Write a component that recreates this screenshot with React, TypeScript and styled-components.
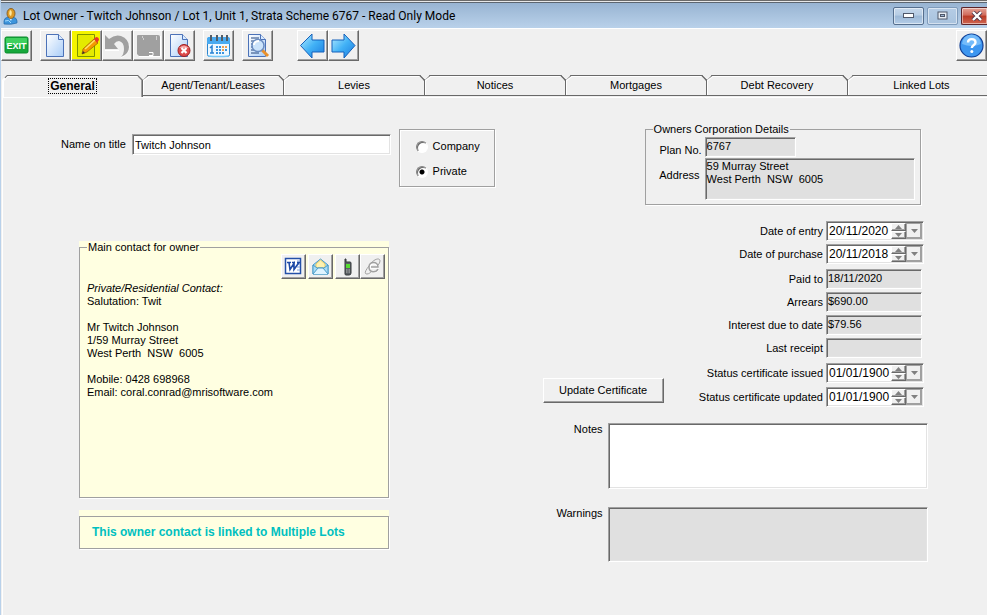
import React from "react";
import styled, { createGlobalStyle, css } from "styled-components";

const GlobalStyle = createGlobalStyle`
  *, *::before, *::after { box-sizing: border-box; }
  body {
    margin: 0;
    background: #f0f0f0;
    color: #000;
    font: 11px/13px "Liberation Sans", Arial, sans-serif;
  }
  button, input, textarea { font: inherit; color: inherit; margin: 0; }
`;

const sunken = css`
  border: 1px solid;
  border-color: #a0a0a0 #fff #fff #a0a0a0;
  box-shadow: inset 1px 1px 0 #696969, inset -1px -1px 0 #e3e3e3;
`;

const raised = css`
  border: 1px solid;
  border-color: #fff #696969 #696969 #fff;
  box-shadow: inset -1px -1px 0 #a0a0a0;
  background: #f0f0f0;
`;

const Window = styled.main`
  display: flex;
  flex-direction: column;
  min-height: 100vh;
  overflow: hidden;
  border-left: 1px solid #b9d1ea;
`;

const TitleBar = styled.header`
  display: flex;
  align-items: center;
  height: 29px;
  padding: 3px 0 0 2px;
  border-top: 1px solid #6b6b6b;
  border-bottom: 1px solid #fff;
  background: linear-gradient(#e8e8e8 1px, #5d6670 1px, #5d6670 2px, #98b4d2 2px, #b9d1ea);
`;

const Title = styled.h1`
  flex: 1;
  margin: 0 0 0 5px;
  font: 12px/18px Roboto, "Noto Sans", sans-serif;
  white-space: nowrap;
`;

const Caption = styled.div`
  display: flex;
  gap: 3px;
`;

const CaptionButton = styled.button<{ $faded?: boolean; $close?: boolean }>`
  display: grid;
  place-items: center;
  width: ${(p) => (p.$close ? 26 : 31)}px;
  height: 18px;
  padding: ${(p) => (p.$close ? "0 0 0 4px" : "0")};
  border: 1px solid ${(p) => (p.$close ? "#5c2328" : p.$faded ? "#7f9bbb" : "#566f8e")};
  border-right-width: ${(p) => (p.$close ? 0 : 1)}px;
  border-radius: ${(p) => (p.$close ? "2px 0 0 2px" : "2px")};
  box-shadow: inset 0 0 0 1px #ffffff80;
  background: ${(p) =>
    p.$close
      ? "linear-gradient(#e3a396, #d0695a 45%, #b93a25 50%, #cf6450)"
      : p.$faded
        ? "linear-gradient(#b5cce5, #a9c3de)"
        : "linear-gradient(#c6d8eb, #b6cce4 45%, #9cb8d6 50%, #b4cde8)"};
`;

const Toolbar = styled.nav`
  display: flex;
  align-items: center;
  gap: 8px;
  padding-top: 1px;
`;

const ToolGroup = styled.div<{ $push?: "near" | "end" }>`
  display: flex;
  margin-left: ${(p) => (p.$push === "end" ? "auto" : p.$push === "near" ? "16px" : "0")};
`;

const ToolButton = styled.button<{ $size?: number; $tint?: string }>`
  ${raised}
  display: grid;
  place-items: center;
  width: ${(p) => p.$size ?? 31}px;
  height: ${(p) => p.$size ?? 31}px;
  padding: 0;
  background: ${(p) => p.$tint ?? "#f0f0f0"};
`;

const Tabs = styled.div`
  display: grid;
  grid-template-columns: repeat(6, 141fr) 148fr;
  margin: 14px -9px 0 1px;
`;

const Tab = styled.button<{ $active?: boolean }>`
  position: relative;
  z-index: ${(p) => (p.$active ? 1 : 0)};
  height: ${(p) => (p.$active ? 22 : 21)}px;
  padding: 0;
  border: 1px solid #696969;
  border-left-color: ${(p) => (p.$active ? "#fff" : "#696969")};
  border-left-width: ${(p) => (p.$active ? 1 : 0)}px;
  border-bottom-width: ${(p) => (p.$active ? 0 : 1)}px;
  border-radius: 5px 5px 0 0;
  corner-shape: bevel;
  background: #f0f0f0;
  box-shadow: inset 1px 1px 0 #fff${(p) => (p.$active ? ", inset -1px 0 0 #a0a0a0" : "")};
  font-weight: ${(p) => (p.$active ? "bold" : "normal")};
  font-size: ${(p) => (p.$active ? 12 : 11)}px;
  line-height: 13px;

  span {
    padding: 0 1px;
    outline: ${(p) => (p.$active ? "1px dotted #000" : "none")};
  }
`;

const Page = styled.section`
  flex: 1;
  display: grid;
  grid-template-columns: 9fr 8fr;
  column-gap: 48px;
  align-items: start;
  margin: 0 0 0 1px;
  padding: 25px 59px 16px 58px;
  border-left: 1px solid #fff;
  border-top: 1px solid #fff;
`;

const Column = styled.div`
  display: flex;
  flex-direction: column;
`;

const NameRow = styled.div`
  display: flex;
  align-items: flex-start;
  gap: 8px;
  padding-top: 6px;
`;

const NameLabel = styled.label`
  width: 63px;
  padding-top: 9px;
  white-space: nowrap;
`;

const NameInput = styled.input`
  ${sunken}
  flex: 1;
  min-width: 0;
  height: 21px;
  margin-top: 5px !important;
  padding: 0 2px;
  background: #fff;
`;

const OwnerKind = styled.fieldset`
  display: flex;
  flex-direction: column;
  gap: 12px;
  width: 96px;
  height: 58px;
  margin: 0;
  padding: 10px 0 0 16px;
  border: 1px solid #a0a0a0;
  box-shadow: inset 1px 1px 0 #fff, 1px 1px 0 #fff;
`;

const Choice = styled.label`
  display: flex;
  align-items: center;
  gap: 5px;

  input {
    appearance: none;
    width: 12px;
    height: 12px;
    border: 1px solid;
    border-color: #808080 #fff #fff #808080;
    border-radius: 50%;
    background: #fff;
    box-shadow: inset 1px 1px 0 #696969;
  }
  input:checked {
    background: radial-gradient(circle, #000 2px, #fff 3px);
  }
`;

const Card = styled.div`
  margin: 54px 106px 0 18px;
  background: #ffffe1;
`;

const NoticeCard = styled(Card)`
  margin-top: 12px;
  padding-top: 6px;
`;

const Group = styled.fieldset<{ $height: number }>`
  min-width: 0;
  min-height: ${(p) => p.$height}px;
  margin: 0;
  padding: 0 3px 3px 7px;
  border: 1px solid #a0a0a0;
  box-shadow: 1px 1px 0 #fff;

  legend {
    margin: 0;
    padding: 0 1px;
  }
`;

const ContactTools = styled.div`
  display: flex;
  justify-content: flex-end;
  gap: 2px;
`;

const ContactText = styled.address`
  margin-top: 3px;
  font-style: normal;
  white-space: pre-line;

  em { font-style: italic; }
`;

const Notice = styled.p`
  margin: 0;
  padding: 9px 12px;
  border: 1px solid #a0a0a0;
  box-shadow: 1px 1px 0 #fff;
  color: #00c0c0;
  font-weight: bold;
  font-size: 12px;
`;

const Corporation = styled.div`
  margin: 0 7px 0 102px;
`;

const CorporationGrid = styled.div`
  display: grid;
  grid-template-columns: 49px 1fr;
  gap: 1px 3px;
  padding: 1px 2px 0 0;

  label {
    padding-top: 7px;
    text-align: right;
  }
  label + input { width: 91px; }
  label:nth-of-type(2) { padding: 11px 2px 0 0; }
`;

const box = css`
  ${sunken}
  display: block;
  width: 100%;
  min-width: 0;
  padding: 1px;
  border-radius: 0;
  resize: none;
  outline: none;
`;

const ReadOnlyInput = styled.input`
  ${box}
  height: 20px;
  padding-bottom: 3px;
  background: #e0e0e0;
`;

const TextArea = styled.textarea<{ $height: number; $locked?: boolean }>`
  ${box}
  height: ${(p) => p.$height}px;
  background: ${(p) => (p.$locked ? "#e0e0e0" : "#fff")};
`;

const FinanceRow = styled.div`
  display: flex;
  align-items: flex-end;
  gap: 16px;
  margin: 16px 4px 0 0;
`;

const UpdateButton = styled.button`
  ${raised}
  width: 121px;
  height: 25px;
  margin-bottom: 4px !important;
  padding: 0;
  white-space: nowrap;
`;

const Fields = styled.div`
  flex: 1;
  display: flex;
  flex-direction: column;
  gap: 5px;
`;

const FieldSet = styled.div<{ $gap?: number }>`
  display: grid;
  grid-template-columns: 1fr 98px;
  align-items: center;
  gap: ${(p) => p.$gap ?? 3}px 3px;

  > label { text-align: right; white-space: nowrap; }
  > input { width: 96px; }
`;

const DateBox = styled.div`
  ${sunken}
  display: flex;
  height: 20px;
  padding: 1px;
  background: #fff;

  input {
    flex: 1;
    min-width: 0;
    padding: 0 1px;
    border: 0;
    background: transparent;
    font-size: 12px;
    outline: none;
  }
`;

const Spinner = styled.div`
  display: flex;
  flex-direction: column;
  width: 15px;
`;

const ArrowButton = styled.button`
  ${raised}
  flex: 1;
  display: grid;
  place-items: center;
  padding: 0;
`;

const DropButton = styled(ArrowButton)`
  flex: 0 0 16px;
  border-color: #a0a0a0;
`;

const MemoRow = styled.div<{ $top: number }>`
  display: grid;
  grid-template-columns: 60px 1fr;
  gap: 5px;
  margin-top: ${(p) => p.$top}px;

  label { text-align: right; }
`;

const UserIcon = () => (
  <svg width="15" height="17" viewBox="0 0 15 17">
    <path d="M1 16v-3q0-3 4-4h5q4 1 4 4v2q-6 2-13 1z" fill="#3d95dc" stroke="#2267a8" strokeWidth=".7" />
    <path d="M5 8h5l-2 5z" fill="#dff1ff" />
    <ellipse cx="8" cy="5.5" rx="4" ry="5" fill="#dc9a26" stroke="#7c5014" strokeWidth=".8" />
    <path d="M7 2q3 1 1 6-3-1-1-6" fill="#ffe9a0" />
    <path d="M2 13q4-2 6 2" stroke="#a4dcff" fill="none" />
  </svg>
);

const PageShape = ({ fill = "url(#paper)", stroke = "#4c72b8" }) => (
  <>
    <defs>
      <linearGradient id="paper" x1="0" y1="0" x2="1" y2="1">
        <stop offset="0" stopColor="#fff" />
        <stop offset="1" stopColor="#a9cdf8" />
      </linearGradient>
    </defs>
    <path d="M4.5 2.5h12l5 5v17h-17z" fill={fill} stroke={stroke} />
    <path d="M16.5 2.5v5h5" fill="#d9eafe" stroke={stroke} />
  </>
);

const Icon = ({ children, size = 27 }: { children: React.ReactNode; size?: number }) => (
  <svg width={size} height={size} viewBox={`0 0 ${size} ${size}`} aria-hidden="true">
    {children}
  </svg>
);

const ExitIcon = () => (
  <Icon>
    <rect x="2" y="5" width="23" height="16" rx="1.500" fill="#16a83b" stroke="#0b8a2c" />
    <path d="M3 7q0-1 1-1h19q1 0 1 1v6H3z" fill="#3fd05e" />
    <text x="13.5" y="17" textAnchor="middle" fill="#fff" fontWeight="bold" fontSize="9" fontFamily="Liberation Sans">EXIT</text>
  </Icon>
);

const EditIcon = () => (
  <Icon>
    <path d="M4.500 2.500h17v22h-17z" fill="#e4ea00" stroke="#7c9500" />
    <path d="M17 3l4 4v-4z" fill="#f4f400" />
    <path d="M9 22l1-5 11-10 4 4-11 9z" fill="#f59a00" stroke="#a06a00" strokeWidth=".8" />
    <path d="M12 17l10-9" stroke="#ffe36b" strokeWidth="1.500" />
    <path d="M21 7l2-2q3 0 3 3l-2 3z" fill="#e8362c" />
    <path d="M9 22l1-3 2 2z" fill="#333" />
  </Icon>
);

const UndoIcon = () => (
  <Icon>
    <path d="M1 18.500h14M17 25.500q9-3 8-13" stroke="#fff" fill="none" />
    <path d="M1 3l4 4q6-5 12-3 8 3 8 11 0 7-8 10 3-3 3-8 0-7-5-8-3 0-5 3l4 5H1z" fill="#a0a0a0" />
  </Icon>
);

const SaveIcon = () => (
  <Icon>
    <path d="M4 24.500h21.500V4" stroke="#fff" fill="none" />
    <path d="M2 4q0-1 1-1h20q2 0 2 2v19H4l-2-2z" fill="#a0a0a0" />
    <path d="M7 5h1M8 7h1M21 5h1M21 7h1M14 20.500h4v3h-4" stroke="#fff" fill="none" />
  </Icon>
);

const DeleteIcon = () => (
  <Icon>
    <PageShape />
    <circle cx="18" cy="18.500" r="6" fill="#dd4b4b" stroke="#9d2020" />
    <path d="M13 16q5-5 10 0z" fill="#f5a5a5" />
    <path d="M15.500 16l5 5m0-5l-5 5" stroke="#fff" strokeWidth="2.200" />
  </Icon>
);

const CalendarIcon = () => (
  <Icon>
    <rect x="2.500" y="5.500" width="22" height="19" rx="2" fill="#eef8ff" stroke="#2c86cf" />
    <path d="M2 12V7q0-2 2-2h19q2 0 2 2v5z" fill="#49aaf0" />
    <path d="M6 3v6M12 3v6M17 3v6M22 3v6" stroke="#525c66" strokeWidth="2" />
    <path d="M5 16l2-2v7M5 21h4" stroke="#2a83d4" strokeWidth="1.500" fill="none" />
    <path d="M11 15h12M11 18h12M11 21h8" stroke="#3a94df" strokeWidth="2" strokeDasharray="2 1" />
    <path d="M17 15h5M17 18h3" stroke="#f0a050" strokeWidth="2" strokeDasharray="2 1" />
    <path d="M3 24q10 1 21 0" stroke="#76c7f8" strokeWidth="1.500" />
  </Icon>
);

const PreviewIcon = () => (
  <Icon>
    <PageShape />
    <path d="M7 6h8M7 9h11M7 12h12M7 15h12M7 18h10M7 21h8" stroke="#26467c" />
    <path d="M18 18l6 6" stroke="#e9912d" strokeWidth="3" />
    <circle cx="14" cy="13.500" r="6" fill="#cbe3fb" stroke="#6a8cc0" strokeWidth="1.500" />
    <path d="M10 13q0-4 5-4" stroke="#fff" strokeWidth="2" fill="none" />
  </Icon>
);

const BlueArrow = ({ flip = false }: { flip?: boolean }) => (
  <Icon>
    <defs>
      <linearGradient id="arrow" x1="0" y1="0" x2="1" y2="1">
        <stop offset="0" stopColor="#b7edff" />
        <stop offset=".5" stopColor="#42b2f6" />
        <stop offset="1" stopColor="#1a7ade" />
      </linearGradient>
    </defs>
    <path
      d={flip ? "M25 13.500L14 2v6H2v12h12v6z" : "M1.500 13.500L13 2v6h12v12H13v6z"}
      fill="url(#arrow)"
      stroke="#1560bb"
    />
  </Icon>
);

const HelpIcon = () => (
  <Icon>
    <circle cx="13.500" cy="13.500" r="11.500" fill="#3d96f0" stroke="#123f94" strokeWidth="1.200" />
    <path d="M4 12a9.500 9.500 0 0119 0q-9 4-19 0" fill="#74bbfa" />
    <path d="M10 10.500c0-4.500 7.500-4.500 7.500 0 0 2.500-3.700 2.500-3.700 5.500" fill="none" stroke="#fff" strokeWidth="2.400" />
    <circle cx="13.800" cy="19.500" r="1.500" fill="#fff" />
  </Icon>
);

const WordIcon = () => (
  <Icon size={19}>
    <rect x="1.500" y="1.500" width="15" height="15" fill="#fff" stroke="#2450a8" strokeWidth="1.500" />
    <path d="M13 4h3M13 7h3M13 10h3M13 13h3" stroke="#7fa0dd" />
    <path d="M5 5.500l1 7 4-6 0 6 5-7M3 5.500h4M8 5.500h3M13 5.500h3" fill="none" stroke="#1d49a6" strokeWidth="1.600" />
  </Icon>
);

const MailIcon = () => (
  <Icon size={19}>
    <path d="M2 8l7.500-6L17 8v9H2z" fill="#9fd8f5" stroke="#4a9bc9" />
    <path d="M5 7l4.500-4L14 7v4H5z" fill="#fff2b0" stroke="#e7ca65" />
    <path d="M2 17V8l4 3h7l4-3v9z" fill="#a9dcf5" stroke="#4a9bc9" />
    <path d="M2 17l5-6h5l5 6" fill="#dff4ff" stroke="#4a9bc9" />
  </Icon>
);

const PhoneIcon = () => (
  <Icon size={19}>
    <path d="M7 2h1v3h4q1 0 1 1v10q0 2-2 2H8q-1 0-1-1z" fill="#5b6064" stroke="#34383b" />
    <rect x="8" y="7" width="4" height="4" fill="#55db30" />
    <path d="M8 13h4M8 15h4" stroke="#bbb" strokeDasharray="1 .5" />
  </Icon>
);

const BrowserIcon = () => (
  <Icon size={19}>
    <g fill="none" stroke="#fff" transform="translate(1 1)">
      <path d="M14 12c-2 4-8 3-8-2s8-6 8 0H7" strokeWidth="1.500" />
    </g>
    <path d="M15 12c-2 4-9 4-9-2s9-6 9 0H8" fill="none" stroke="#a0a0a0" strokeWidth="1.500" />
    <path d="M6 9c-4 5-5 8-2 8 2 0 4-2 4-2M8 6c5-5 9-5 9-2q0 2-2 4" fill="none" stroke="#a0a0a0" />
  </Icon>
);

const Arrow = ({ up = false }: { up?: boolean }) => (
  <svg width="7" height="4" viewBox="0 0 7 4" aria-hidden="true">
    <path d={up ? "M0 4L3.500 0 7 4z" : "M0 0h7L3.500 4z"} fill="#808080" />
  </svg>
);

const tabNames = ["General", "Agent/Tenant/Leases", "Levies", "Notices", "Mortgages", "Debt Recovery", "Linked Lots"];

const DateField = ({ id, label, value }: { id: string; label: string; value: string }) => (
  <>
    <label htmlFor={id}>{label}</label>
    <DateBox>
      <input id={id} defaultValue={value} />
      <Spinner>
        <ArrowButton aria-label={`${label} up`}><Arrow up /></ArrowButton>
        <ArrowButton aria-label={`${label} down`}><Arrow /></ArrowButton>
      </Spinner>
      <DropButton aria-label={`${label} calendar`}><Arrow /></DropButton>
    </DateBox>
  </>
);

const AmountField = ({ id, label, value }: { id: string; label: string; value: string }) => (
  <>
    <label htmlFor={id}>{label}</label>
    <ReadOnlyInput id={id} readOnly value={value} />
  </>
);

export default function App() {
  return (
    <Window>
      <GlobalStyle />
      <TitleBar>
        <UserIcon />
        <Title>Lot Owner - Twitch Johnson / Lot 1, Unit 1, Strata Scheme 6767 - Read Only Mode</Title>
        <Caption>
          <CaptionButton aria-label="Minimize">
            <svg width="12" height="6"><rect x=".5" y=".5" width="10" height="4" fill="#fff" stroke="#50586a" /></svg>
          </CaptionButton>
          <CaptionButton aria-label="Maximize" $faded>
            <svg width="12" height="10">
              <rect x="1" y="1" width="9" height="7" fill="#e8eef5" stroke="#50586a" />
              <rect x="3.500" y="3.500" width="4" height="2" fill="#9cb4d0" stroke="#50586a" />
            </svg>
          </CaptionButton>
          <CaptionButton aria-label="Close" $close>
            <svg width="12" height="10">
              <path d="M2 1l8 8M10 1L2 9" stroke="#50364a" strokeWidth="4" />
              <path d="M2 1l8 8M10 1L2 9" stroke="#fff" strokeWidth="2.400" />
            </svg>
          </CaptionButton>
        </Caption>
      </TitleBar>

      <Toolbar>
        <ToolGroup>
          <ToolButton aria-label="Exit"><ExitIcon /></ToolButton>
        </ToolGroup>
        <ToolGroup>
          <ToolButton aria-label="New"><Icon><PageShape /></Icon></ToolButton>
          <ToolButton aria-label="Edit" $tint="#f4f400"><EditIcon /></ToolButton>
          <ToolButton aria-label="Undo"><UndoIcon /></ToolButton>
          <ToolButton aria-label="Save"><SaveIcon /></ToolButton>
          <ToolButton aria-label="Delete"><DeleteIcon /></ToolButton>
        </ToolGroup>
        <ToolGroup>
          <ToolButton aria-label="Calendar"><CalendarIcon /></ToolButton>
        </ToolGroup>
        <ToolGroup>
          <ToolButton aria-label="Preview"><PreviewIcon /></ToolButton>
        </ToolGroup>
        <ToolGroup $push="near">
          <ToolButton aria-label="Previous"><BlueArrow /></ToolButton>
          <ToolButton aria-label="Next"><BlueArrow flip /></ToolButton>
        </ToolGroup>
        <ToolGroup $push="end">
          <ToolButton aria-label="Help"><HelpIcon /></ToolButton>
        </ToolGroup>
      </Toolbar>

      <Tabs role="tablist">
        {tabNames.map((name, i) => (
          <Tab key={name} role="tab" aria-selected={i === 0} $active={i === 0}>
            <span>{name}</span>
          </Tab>
        ))}
      </Tabs>

      <Page>
        <Column>
          <NameRow>
            <NameLabel htmlFor="name">Name on title</NameLabel>
            <NameInput id="name" defaultValue="Twitch Johnson" />
            <OwnerKind aria-label="Owner type">
              <Choice><input type="radio" name="kind" />Company</Choice>
              <Choice><input type="radio" name="kind" defaultChecked />Private</Choice>
            </OwnerKind>
          </NameRow>
          <Card>
            <Group $height={257}>
              <legend>Main contact for owner</legend>
              <ContactTools>
                <ToolGroup>
                  <ToolButton $size={25} aria-label="Word letter"><WordIcon /></ToolButton>
                </ToolGroup>
                <ToolGroup>
                  <ToolButton $size={25} aria-label="Email"><MailIcon /></ToolButton>
                </ToolGroup>
                <ToolGroup>
                  <ToolButton $size={25} aria-label="Text message"><PhoneIcon /></ToolButton>
                  <ToolButton $size={25} aria-label="Web"><BrowserIcon /></ToolButton>
                </ToolGroup>
              </ContactTools>
              <ContactText>
                <em>Private/Residential Contact:</em>
                {`
                Salutation: Twit

                Mr Twitch Johnson
                1/59 Murray Street
                West Perth\u00a0 NSW\u00a0 6005

                Mobile: 0428 698968
                Email: coral.conrad@mrisoftware.com`}
              </ContactText>
            </Group>
          </Card>
          <NoticeCard>
            <Notice>This owner contact is linked to Multiple Lots</Notice>
          </NoticeCard>
        </Column>

        <Column>
          <Corporation>
            <Group $height={82}>
              <legend>Owners Corporation Details</legend>
              <CorporationGrid>
                <label htmlFor="plan">Plan No.</label>
                <ReadOnlyInput id="plan" readOnly value="6767" />
                <label htmlFor="address">Address</label>
                <TextArea id="address" $height={42} $locked readOnly value={"59 Murray Street\nWest Perth  NSW  6005"} />
              </CorporationGrid>
            </Group>
          </Corporation>

          <FinanceRow>
            <UpdateButton>Update Certificate</UpdateButton>
            <Fields>
              <FieldSet>
                <DateField id="entry" label="Date of entry" value="20/11/2020" />
                <DateField id="purchase" label="Date of purchase" value="20/11/2018" />
              </FieldSet>
              <FieldSet>
                <AmountField id="paid" label="Paid to" value="18/11/2020" />
                <AmountField id="arrears" label="Arrears" value="$690.00" />
                <AmountField id="interest" label="Interest due to date" value="$79.56" />
                <AmountField id="receipt" label="Last receipt" value="" />
              </FieldSet>
              <FieldSet $gap={4}>
                <DateField id="issued" label="Status certificate issued" value="01/01/1900" />
                <DateField id="updated" label="Status certificate updated" value="01/01/1900" />
              </FieldSet>
            </Fields>
          </FinanceRow>

          <MemoRow $top={16}>
            <label htmlFor="notes">Notes</label>
            <TextArea id="notes" $height={66} />
          </MemoRow>
          <MemoRow $top={18}>
            <label htmlFor="warnings">Warnings</label>
            <TextArea id="warnings" $height={55} $locked readOnly />
          </MemoRow>
        </Column>
      </Page>
    </Window>
  );
}
